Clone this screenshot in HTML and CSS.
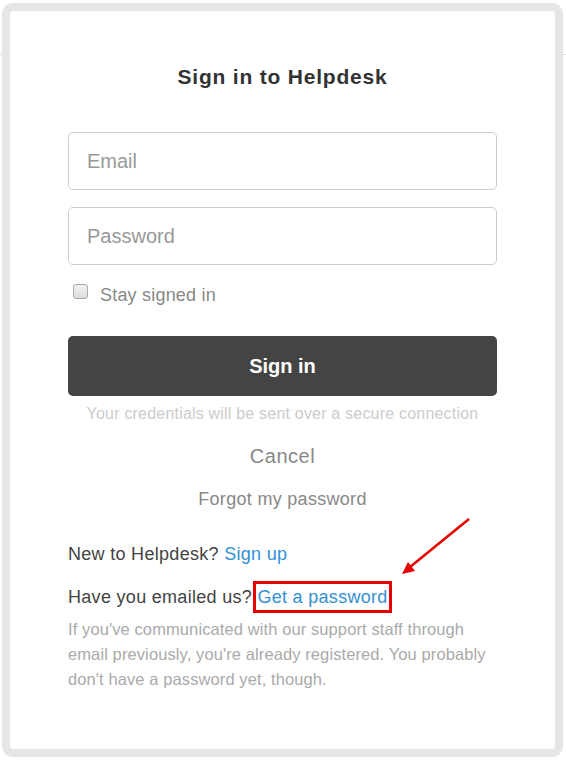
FILE: index.html
```html
<!DOCTYPE html>
<html lang="en">
<head>
  <meta charset="UTF-8" />
  <meta name="viewport" content="width=device-width, initial-scale=1.0" />
  <title>Sign in to Helpdesk</title>
  <link rel="stylesheet" href="styles.css">
</head>
<body>
  <div class="modal">
    <h1>Sign in to Helpdesk</h1>

    <form class="signin-form" onsubmit="return false">
      <input type="text" class="field" placeholder="Email" />
      <input type="password" class="field" placeholder="Password" />
      <label class="remember">
        <span class="checkbox"></span>
        Stay signed in
      </label>
      <button class="signin-btn">Sign in</button>
      <p class="secure-note">Your credentials will be sent over a secure connection</p>
      <a class="cancel-link" href="#">Cancel</a>
      <a class="forgot-link" href="#">Forgot my password</a>
    </form>

    <div class="extra">
      <p class="extra-line">New to Helpdesk? <a href="#">Sign up</a></p>
      <p class="extra-line">Have you emailed us? <a href="#" class="boxed">Get a password</a></p>
      <p class="extra-note">If you've communicated with our support staff through email previously, you're already registered. You probably don't have a password yet, though.</p>
    </div>

    <svg class="arrow" width="90" height="75" viewBox="0 0 90 75">
      <line x1="78" y1="9" x2="19" y2="57" stroke="#e60000" stroke-width="2.5" />
      <polygon points="11,64 24,61 17,52" fill="#e60000" />
    </svg>
  </div>
</body>
</html>
```

FILE: styles.css
```css
* { box-sizing: border-box; }
body {
  margin: 0;
  font-family: 'Liberation Sans', Arial, sans-serif;
  color: #444;
  background: #fff linear-gradient(#fff 54px, #ddd 54px, #ddd 55px, #fff 55px) no-repeat;
}
.modal {
  position: relative;
  width: 561px;
  height: 754px;
  margin: 3px 0 0 2px;
  padding: 54px 58px 0;
  background: #fff;
  border: 8px solid #e6e6e6;
  border-radius: 11px;
}
h1 {
  margin: 0;
  font-size: 21px;
  line-height: 24px;
  font-weight: bold;
  letter-spacing: 0.8px;
  color: #333;
  text-align: center;
}
.signin-form {
  display: flex;
  flex-direction: column;
  margin-top: 43px;
}
.field {
  height: 58px;
  padding: 0 18px;
  font-family: inherit;
  font-size: 20px;
  color: #444;
  border: 1px solid #ccc;
  border-radius: 5px;
  margin-bottom: 17px;
}
.field::placeholder { color: #999; }
.remember {
  display: flex;
  align-items: center;
  gap: 12px;
  margin: 1px 0 0 6px;
  height: 24px;
  font-size: 18px;
  letter-spacing: 0.2px;
  color: #888;
}
.checkbox {
  width: 15px;
  height: 15px;
  margin: -8px 0 0 -1px;
  border: 1px solid #aaa;
  border-radius: 3px;
  background: linear-gradient(#f2f2f2, #dcdcdc);
}
.signin-btn {
  height: 60px;
  margin-top: 29px;
  font-family: inherit;
  font-size: 20px;
  font-weight: bold;
  color: #fff;
  background-color: #444;
  border: none;
  border-radius: 5px;
  cursor: pointer;
}
.secure-note {
  margin: 9px 0 0;
  font-size: 16px;
  line-height: 18px;
  letter-spacing: 0.2px;
  color: #ccc;
  text-align: center;
}
.cancel-link {
  margin-top: 21px;
  font-size: 20px;
  line-height: 24px;
  letter-spacing: 0.5px;
  color: #888;
  text-align: center;
  text-decoration: none;
}
.forgot-link {
  margin-top: 20px;
  font-size: 18px;
  line-height: 22px;
  letter-spacing: 0.3px;
  color: #888;
  text-align: center;
  text-decoration: none;
}
.extra { margin-top: 32px; }
.extra-line {
  margin: 0 0 19px;
  font-size: 18px;
  line-height: 24px;
  letter-spacing: 0.3px;
  color: #444;
}
.extra-line a {
  color: #3391d2;
  text-decoration: none;
}
.extra-line a.boxed {
  padding: 2px 0;
  outline: 3px solid #e60000;
  outline-offset: 1px;
}
.extra-note {
  margin: -11px 0 0;
  font-size: 16.5px;
  line-height: 25px;
  letter-spacing: 0.1px;
  color: #aaa;
}
.arrow {
  position: absolute;
  left: 381px;
  top: 499px;
}
```
